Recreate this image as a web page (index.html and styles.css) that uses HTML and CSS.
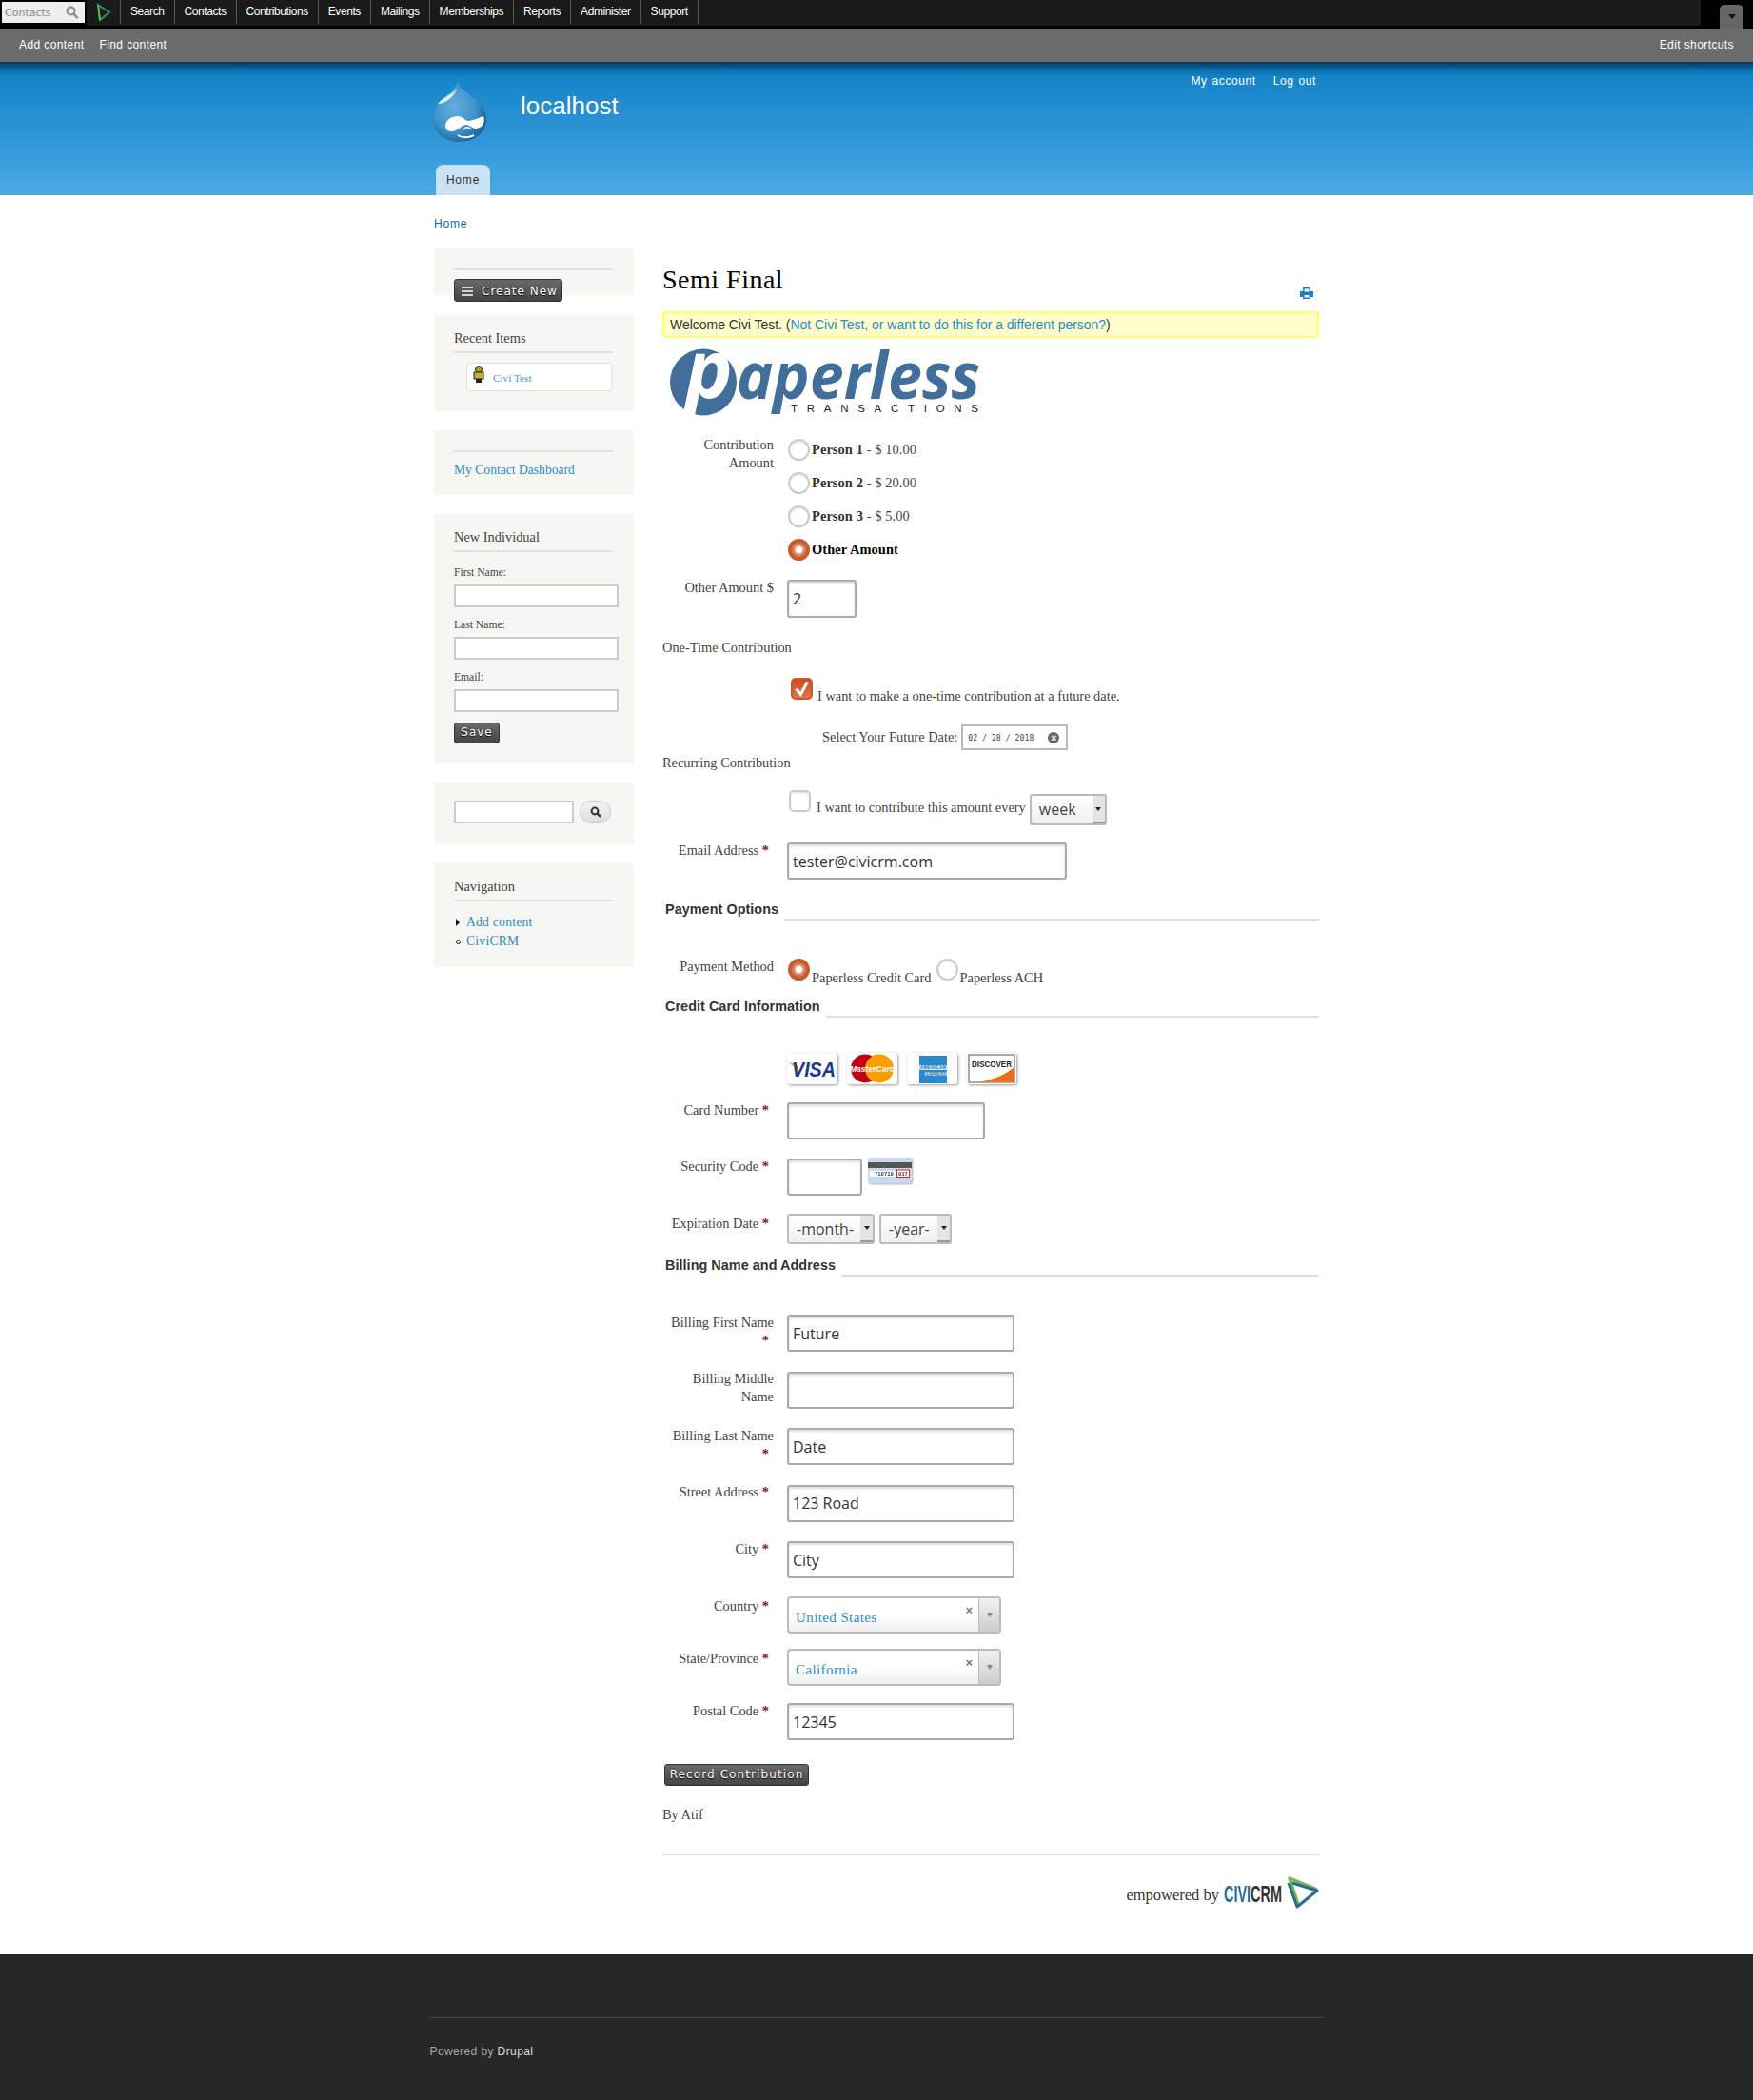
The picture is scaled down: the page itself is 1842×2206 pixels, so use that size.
FILE: index.html
```html
<!DOCTYPE html>
<html lang="en">
<head>
  <meta charset="UTF-8">
  <meta name="viewport" content="width=device-width, initial-scale=1.0">
  <title>Semi Final | localhost</title>
  <link rel="stylesheet" href="styles.css">
</head>
<body>

<div class="civi-bar">
  <div class="civi-quick">
    <div class="quick-box">
      <span>Contacts</span>
      <svg width="14" height="14" viewBox="0 0 14 14"><circle cx="5.5" cy="5.5" r="4" fill="none" stroke="#888" stroke-width="2"/><path d="M8.5 8.5l4 4.5" stroke="#888" stroke-width="2.4"/></svg>
    </div>
  </div>
  <nav class="civi-menu">
    <a class="civi-logo-item"><svg width="16" height="20" viewBox="0 0 16 20"><path d="M2 2l12 8-10 8z" fill="none" stroke="#3b8a6a" stroke-width="2"/><path d="M2 2l2 16" stroke="#5fae4c" stroke-width="2"/></svg></a>
    <a>Search</a>
    <a>Contacts</a>
    <a>Contributions</a>
    <a>Events</a>
    <a>Mailings</a>
    <a>Memberships</a>
    <a>Reports</a>
    <a>Administer</a>
    <a>Support</a>
  </nav>
  <div class="bar-handle"><span></span></div>
</div>

<div class="shortcut-bar">
  <a>Add content</a>
  <a>Find content</a>
  <a class="edit-shortcuts">Edit shortcuts</a>
</div>

<header class="site-header">
  <div class="header-top">
    <svg class="drupal-logo" width="57" height="64" viewBox="0 0 57 64">
      <defs>
        <radialGradient id="dropFill" cx="40%" cy="42%" r="62%">
          <stop offset="0" stop-color="#63afdf"/>
          <stop offset="0.65" stop-color="#3f93cb"/>
          <stop offset="1" stop-color="#1a689f"/>
        </radialGradient>
      </defs>
      <path d="M26 0C27 6 32 10 38 14 48 21 56 30 56 41 56 54 44 64 28 64 12 64 0 54 0 41 0 28 8 21 16 14 20 11 25 6 26 0Z" fill="url(#dropFill)"/>
      <path d="M25 8C22 13 10 17 5 24 12 24 22 18 25 8Z" fill="#d8ecf7"/>
      <path d="M13 47C13 41 20 37 26 37 31 37 34 42 37 42 41 42 47 39 53 37 56 44 50 51 44 50 40 49 38 46 35 46 30 46 26 53 19 53 15 53 13 50 13 47Z" fill="#fff"/>
      <path d="M32 51c2-3 6-3 8 0" fill="none" stroke="#fff" stroke-width="1.5"/>
      <path d="M26 57c5 3 11 3 17 0" fill="none" stroke="#fff" stroke-width="2"/>
    </svg>
    <div class="site-name">localhost</div>
    <div class="user-links"><a>My account</a><a>Log out</a></div>
  </div>
  <div class="tab-home">Home</div>
</header>

<div class="page">
  <div class="breadcrumb"><a>Home</a></div>

  <div class="columns">
    <aside class="sidebar">
      <section class="block block-create">
        <div class="rule"></div>
        <a class="btn btn-create">
          <svg width="13" height="10" viewBox="0 0 13 10"><path d="M0 1h12M0 5h12M0 9h12" stroke="#fff" stroke-width="1.6"/></svg>
          Create New
        </a>
      </section>

      <section class="block block-recent">
        <h2>Recent Items</h2>
        <div class="recent-card">
          <svg width="12" height="18" viewBox="0 0 12 18"><circle cx="6" cy="4" r="3.5" fill="#b39a1c" stroke="#222"/><rect x="1" y="7" width="10" height="7" fill="#c7ad2a" stroke="#222"/><rect x="3" y="14" width="6" height="4" fill="#222"/></svg>
          <a>Civi Test</a>
        </div>
      </section>

      <section class="block block-dash">
        <div class="rule"></div>
        <a class="side-link">My Contact Dashboard</a>
      </section>

      <section class="block block-new">
        <h2>New Individual</h2>
        <div class="side-field"><label>First Name:</label><input type="text"></div>
        <div class="side-field"><label>Last Name:</label><input type="text"></div>
        <div class="side-field"><label>Email:</label><input type="text"></div>
        <a class="btn btn-save">Save</a>
      </section>

      <section class="block block-search">
        <input type="text">
        <a class="search-btn"><svg width="12" height="12" viewBox="0 0 12 12"><circle cx="5" cy="5" r="3.4" fill="none" stroke="#333" stroke-width="2"/><path d="M7.5 7.5l3.5 3.5" stroke="#333" stroke-width="2.4"/></svg></a>
      </section>

      <section class="block block-nav">
        <h2>Navigation</h2>
        <ul>
          <li><span class="mark-tri"></span><a>Add content</a></li>
          <li><span class="mark-dot"></span><a>CiviCRM</a></li>
        </ul>
      </section>
    </aside>

    <main class="content">
      <div class="title-row">
        <h1>Semi Final</h1>
        <svg class="print-icon" width="14" height="12" viewBox="0 0 14 12"><path d="M3 0h8v4h3v6h-3v2H3v-2H0V4h3z" fill="#1a7fc4"/><rect x="4.5" y="1.5" width="5" height="3" fill="#fff"/><rect x="4.5" y="8" width="5" height="2.5" fill="#fff"/></svg>
      </div>

      <div class="welcome">Welcome Civi Test. (<a>Not Civi Test, or want to do this for a different person?</a>)</div>

      <svg class="paperless" width="350" height="85" viewBox="0 0 350 85">
        <circle cx="43" cy="41.500" r="35" fill="#426e9c"/>
        <text class="pl-p" x="24" y="58" font-size="84">p</text>
        <text class="pl-word" x="78" y="59" font-size="68" textLength="256" lengthAdjust="spacingAndGlyphs">aperless</text>
        <text class="pl-sub" x="135" y="73" font-size="11.500" textLength="197">TRANSACTIONS</text>
      </svg>

      <div class="row row-opts">
        <label>Contribution Amount</label>
        <div class="field">
          <div class="opt"><input type="radio" name="amt"><span><b>Person 1</b> - $ 10.00</span></div>
          <div class="opt"><input type="radio" name="amt"><span><b>Person 2</b> - $ 20.00</span></div>
          <div class="opt"><input type="radio" name="amt"><span><b>Person 3</b> - $ 5.00</span></div>
          <div class="opt"><input type="radio" name="amt" checked><span><b class="strong">Other Amount</b></span></div>
        </div>
      </div>

      <div class="row row-other">
        <label>Other Amount $</label>
        <div class="field"><input class="text-in w-other" type="text" value="2"></div>
      </div>

      <div class="sub-title one-time">One-Time Contribution</div>
      <div class="check-row check-future">
        <span class="check on"><svg width="19" height="19" viewBox="0 0 16 16"><path d="M3 8l4 5 6-11" fill="none" stroke="#fff" stroke-width="2.6"/></svg></span>
        <span class="check-text">I want to make a one-time contribution at a future date.</span>
      </div>
      <div class="date-row">
        <span>Select Your Future Date:</span>
        <div class="date-in">
          <span>02 / 28 / 2018</span>
          <i>&times;</i>
        </div>
      </div>

      <div class="sub-title recurring">Recurring Contribution</div>
      <div class="check-row check-recur">
        <span class="check"></span>
        <span class="check-text">I want to contribute this amount every</span>
        <div class="sel sel-week"><span>week</span><i></i></div>
      </div>

      <div class="row row-email">
        <label>Email Address <span class="req">*</span></label>
        <div class="field"><input class="text-in w-email" type="text" value="tester@civicrm.com"></div>
      </div>

      <div class="legend legend-pay"><span>Payment Options</span><i></i></div>

      <div class="row row-method">
        <label>Payment Method</label>
        <div class="field method">
          <input type="radio" name="pm" checked><span>Paperless Credit Card</span>
          <input type="radio" name="pm"><span>Paperless ACH</span>
        </div>
      </div>

      <div class="legend"><span>Credit Card Information</span><i></i></div>

      <div class="cards">
        <div class="card">
          <svg width="53" height="33" viewBox="0 0 53 33"><path d="M2 10l8 2 3 8z" fill="#e9a11f"/><text class="card-visa" x="5" y="25" font-size="22" textLength="46" lengthAdjust="spacingAndGlyphs">VISA</text></svg>
        </div>
        <div class="card">
          <svg width="53" height="33" viewBox="0 0 53 33"><circle cx="19" cy="16.500" r="15" fill="#c4000f"/><circle cx="34" cy="16.500" r="15" fill="#fa9e00"/><text class="card-mc" x="3" y="20" font-size="9" textLength="47" lengthAdjust="spacingAndGlyphs">MasterCard</text></svg>
        </div>
        <div class="card">
          <svg width="53" height="33" viewBox="0 0 53 33"><rect x="13" y="3" width="29" height="29" fill="#2a8ad0"/><rect x="13" y="13" width="29" height="5" fill="#cfe4f5"/><rect x="19" y="20" width="23" height="4" fill="#cfe4f5"/><text class="card-amex" x="14" y="17" font-size="4.500" textLength="27">AMERICAN</text><text class="card-amex" x="20" y="24" font-size="4.500" textLength="21">EXPRESS</text></svg>
        </div>
        <div class="card card-last">
          <svg width="52" height="33" viewBox="0 0 52 33"><rect x="2" y="2" width="48" height="29" fill="#fff" stroke="#555"/><path d="M13 30.500C30 28 42 22 49.500 15v15.500z" fill="#f26b14"/><text class="card-disc" x="5" y="15" font-size="9" textLength="42" lengthAdjust="spacingAndGlyphs">DISCOVER</text></svg>
        </div>
      </div>

      <div class="row row-card">
        <label>Card Number <span class="req">*</span></label>
        <div class="field"><input class="text-in w-card" type="text"></div>
      </div>

      <div class="row row-cvv">
        <label>Security Code <span class="req">*</span></label>
        <div class="field cvv-field">
          <input class="text-in w-cvv" type="text">
          <svg class="cvv-img" width="46" height="27" viewBox="0 0 46 27"><rect width="46" height="27" rx="2" fill="#c9daf0"/><rect y="5" width="46" height="6" fill="#555"/><rect x="2" y="14" width="41" height="6" fill="#fff"/><text class="cvv-num" x="7" y="19" font-size="5.500">710710</text><rect x="30.500" y="13" width="13" height="7.500" fill="#fff" stroke="#d9281c"/><text class="cvv-num" x="32" y="19" font-size="5.500">037</text></svg>
        </div>
      </div>

      <div class="row row-exp">
        <label>Expiration Date <span class="req">*</span></label>
        <div class="field exp-field">
          <div class="sel sel-month"><span>-month-</span><i></i></div>
          <div class="sel sel-year"><span>-year-</span><i></i></div>
        </div>
      </div>

      <div class="legend legend-bill"><span>Billing Name and Address</span><i></i></div>

      <div class="row row-bill-first">
        <label>Billing First Name <span class="req">*</span></label>
        <div class="field"><input class="text-in w-bill" type="text" value="Future"></div>
      </div>
      <div class="row row-bill">
        <label>Billing Middle Name</label>
        <div class="field"><input class="text-in w-bill" type="text"></div>
      </div>
      <div class="row row-bill">
        <label>Billing Last Name <span class="req">*</span></label>
        <div class="field"><input class="text-in w-bill" type="text" value="Date"></div>
      </div>
      <div class="row row-bill">
        <label>Street Address <span class="req">*</span></label>
        <div class="field"><input class="text-in w-bill" type="text" value="123 Road"></div>
      </div>
      <div class="row row-bill">
        <label>City <span class="req">*</span></label>
        <div class="field"><input class="text-in w-bill" type="text" value="City"></div>
      </div>
      <div class="row row-country">
        <label>Country <span class="req">*</span></label>
        <div class="field">
          <div class="chosen"><a>United States</a><b>&times;</b><i><span></span></i></div>
        </div>
      </div>
      <div class="row row-state">
        <label>State/Province <span class="req">*</span></label>
        <div class="field">
          <div class="chosen"><a>California</a><b>&times;</b><i><span></span></i></div>
        </div>
      </div>
      <div class="row row-postal">
        <label>Postal Code <span class="req">*</span></label>
        <div class="field"><input class="text-in w-bill" type="text" value="12345"></div>
      </div>

      <a class="btn btn-record">Record Contribution</a>

      <p class="by-line">By Atif</p>

      <div class="empowered">
        <span>empowered by</span>
        <svg width="101" height="34" viewBox="5 0 101 34">
          <text class="civi-word" x="6" y="27" font-size="23" textLength="61" lengthAdjust="spacingAndGlyphs"><tspan fill="#2b6c96">CIVI</tspan><tspan fill="#333">CRM</tspan></text>
          <path d="M75 2l27 11M75 2l9 28" fill="none" stroke="#76b852" stroke-width="3.500" stroke-linecap="round"/>
          <path d="M74 7l9 25 21-17-26-8" fill="none" stroke="#2b6c96" stroke-width="3" stroke-linejoin="round"/>
        </svg>
      </div>
    </main>
  </div>
</div>

<footer class="site-footer">
  <div class="footer-inner">Powered by <a>Drupal</a></div>
</footer>

</body>
</html>
```

FILE: styles.css
```css
* {
  box-sizing: border-box;
}
html {
  background: #272727;
}
body {
  margin: 0;
  font-family: "Liberation Serif", serif;
  font-size: 14.4px;
  color: #444;
  background: #fff;
}
a {
  color: #2a8ccb;
  text-decoration: none;
}
input {
  margin: 0;
}

/* top civi menu */
.civi-bar {
  display: flex;
  height: 30px;
  background: #000;
}
.civi-quick {
  width: 91px;
  padding: 2px 0 0 2px;
}
.quick-box {
  display: flex;
  align-items: center;
  justify-content: space-between;
  width: 87px;
  height: 22px;
  padding: 0 6px 0 3px;
  background: #eee;
  color: #888;
  font: 11px "DejaVu Sans", sans-serif;
}
.civi-menu {
  display: flex;
  width: 1696px;
  height: 27px;
  background: #1a1a1a;
  font: 12px "Liberation Sans", sans-serif;
  letter-spacing: -0.42px;
}
.civi-menu a {
  height: 25px;
  padding: 0 10px;
  border-right: 1px solid #5a5a5a;
  color: #fff;
  line-height: 25px;
}
.civi-menu .civi-logo-item {
  display: flex;
  align-items: center;
  width: 36px;
  padding: 0 0 0 10px;
}
.bar-handle {
  display: flex;
  align-items: center;
  justify-content: center;
  width: 25px;
  height: 25px;
  margin: 5px 0 0 20px;
  background: #666;
  border-radius: 5px 5px 0 0;
}
.bar-handle span {
  border-top: 5px solid #111;
  border-left: 4px solid transparent;
  border-right: 4px solid transparent;
}

.shortcut-bar {
  display: flex;
  gap: 16px;
  height: 35px;
  padding: 0 20px;
  background: #6b6b6b;
  font: 12px "Liberation Sans", sans-serif;
  letter-spacing: 0.4px;
  line-height: 34px;
}
.shortcut-bar a {
  color: #fff;
}
.shortcut-bar .edit-shortcuts {
  margin-left: auto;
}

/* blue header */
.site-header {
  height: 140px;
  padding: 12px 456px 0;
  background: linear-gradient(#02395c, #0d76b6 10px, #1684c9 12%, #48a9e4);
}
.header-top {
  display: flex;
  height: 96px;
}
.drupal-logo {
  margin: 8px 0 0 -1px;
}
.site-name {
  margin: 8px 0 0 35px;
  color: #fff;
  font: 26px/52px "Liberation Sans", sans-serif;
}
.user-links {
  display: flex;
  gap: 18px;
  margin-left: auto;
  padding-right: 3px;
  font: 12px/16px "Liberation Sans", sans-serif;
  letter-spacing: 0.6px;
  word-spacing: 1px;
}
.user-links a {
  color: #fff;
}
.tab-home {
  width: 57px;
  height: 32px;
  margin-left: 2px;
  background: #c9e2f5;
  border-radius: 8px 8px 0 0;
  color: #333;
  font: 12px/32px "Liberation Sans", sans-serif;
  letter-spacing: 0.8px;
  text-align: center;
}

/* page */
.page {
  width: 930px;
  margin: 0 auto;
  padding-bottom: 48px;
}
.breadcrumb {
  height: 56px;
  padding-top: 22px;
  font: 12px/16px "Liberation Sans", sans-serif;
  letter-spacing: 0.8px;
}
.breadcrumb a {
  color: #0071b3;
}
.columns {
  display: flex;
  gap: 30px;
}

/* sidebar */
.sidebar {
  display: flex;
  flex-direction: column;
  gap: 20px;
  width: 210px;
  flex: none;
}
.block {
  padding: 0 21px;
  background: #f6f6f2;
}
.block h2 {
  margin: 0;
  padding: 14px 0 4px;
  border-bottom: 2px solid #e2e1dc;
  color: #444;
  font-size: 14.4px;
  font-weight: normal;
  line-height: 20px;
  width: 167px;
}
.rule {
  width: 167px;
  border-bottom: 2px solid #e2e1dc;
}
.btn {
  display: block;
  background: linear-gradient(#6a6a6a, #444);
  border: 1px solid #333;
  border-radius: 3px;
  color: #fff;
  font: 12px "DejaVu Sans", sans-serif;
  text-shadow: 0 1px 1px #000;
}
.block-create {
  height: 49px;
  margin-bottom: 1px;
  padding-top: 21px;
}
.btn-create {
  display: flex;
  align-items: center;
  gap: 8px;
  width: 114px;
  height: 24px;
  margin-top: 9px;
  padding: 1px 0 0 7px;
  letter-spacing: 1px;
}
.block-recent {
  height: 101px;
}
.recent-card {
  display: flex;
  gap: 9px;
  width: 153px;
  height: 30px;
  margin: 10px 0 0 13px;
  padding: 2px 0 0 6px;
  background: #fff;
  border: 1px solid #e2e1dc;
  border-radius: 3px;
  font-size: 11px;
}
.recent-card a {
  padding-top: 7px;
  color: #4a90e2;
  letter-spacing: 0.1px;
}
.block-dash {
  height: 68px;
  padding-top: 21px;
}
.side-link {
  display: block;
  margin-top: 11px;
  font-size: 13.6px;
  line-height: 16px;
}
.block-new {
  height: 262px;
}
.block-new h2 {
  margin-bottom: 3px;
}
.side-field {
  padding-top: 11px;
}
.side-field label {
  display: block;
  font-size: 11.6px;
  line-height: 15px;
}
.side-field input {
  display: block;
  width: 173px;
  height: 24px;
  margin-top: 5px;
}
.sidebar input {
  background: #fff;
  border: 2px solid #ccc;
  border-right-width: 2px;
}
.btn-save {
  width: 48px;
  height: 22px;
  margin-top: 11px;
  letter-spacing: 1px;
  line-height: 19px;
  text-align: center;
}
.block-search {
  display: flex;
  gap: 6px;
  height: 64px;
  padding-top: 19px;
}
.block-search input {
  width: 126px;
  height: 24px;
}
.search-btn {
  display: flex;
  align-items: center;
  justify-content: center;
  width: 33px;
  height: 24px;
  background: linear-gradient(#f3f3f3, #dedede);
  border: 1px solid #ccc;
  border-radius: 12px;
}
.block-nav {
  height: 110px;
}
.block-nav h2 {
  padding-top: 15px;
}
.block-nav ul {
  margin: 11px 0 0;
  padding: 1px 0 0;
  list-style: none;
}
.block-nav li {
  display: flex;
  align-items: center;
  height: 20px;
  font-size: 13.6px;
  letter-spacing: 0.25px;
}
.mark-tri {
  width: 13px;
}
.mark-tri::before {
  content: "";
  display: block;
  margin-left: 2px;
  width: 0;
  border-left: 4px solid #111;
  border-top: 4px solid transparent;
  border-bottom: 4px solid transparent;
}
.mark-dot {
  width: 5px;
  height: 5px;
  margin: 0 6px 0 2px;
  border: 1.5px solid #111;
  border-radius: 50%;
}

/* main form */
.content {
  width: 690px;
}
.title-row {
  display: flex;
  align-items: flex-end;
  justify-content: space-between;
  margin-top: 17px;
}
.title-row h1 {
  margin: 0;
  color: #000;
  font-size: 28px;
  font-weight: normal;
  letter-spacing: 0.5px;
  line-height: 32px;
}
.print-icon {
  margin: 0 6px -4px 0;
}
.welcome {
  height: 28px;
  margin-top: 17px;
  padding-left: 6px;
  background: #ffc;
  border: 2px solid #ffff66;
  border-radius: 4px;
  color: #333;
  font: 14px/24px "Liberation Sans", sans-serif;
  letter-spacing: -0.03px;
}
.paperless {
  display: block;
  margin-top: 5px;
}
.pl-p {
  fill: #fff;
  font-family: "Open Sans", sans-serif;
  font-style: italic;
  font-weight: 700;
}
.pl-word {
  fill: #426e9c;
  font-family: "Open Sans", sans-serif;
  font-style: italic;
  font-weight: 700;
}
.pl-sub {
  fill: #222;
  font-family: "Liberation Sans", sans-serif;
}

.row {
  display: grid;
  grid-template-columns: 117px 1fr;
  column-gap: 14px;
}
.row > label {
  margin-top: -1.5px;
  line-height: 19px;
  text-align: right;
}
.req {
  margin-right: 5px;
  color: #8b1a1a;
  font-weight: bold;
}
.text-in {
  display: block;
  height: 39px;
  padding: 0 4px;
  background: #fff;
  border: 2px solid #aaa;
  border-radius: 3px;
  box-shadow: inset 0 2px 3px #ddd;
  color: #333;
  font: 16px "Open Sans", sans-serif;
}
input[type="radio"] {
  appearance: none;
  flex: none;
  width: 23px;
  height: 23px;
  margin: 0 0 0 1px;
  background: #fff;
  border: 2px solid #ccc;
  border-radius: 50%;
  box-shadow: inset 0 1px 2px #ddd;
}
input[type="radio"]:checked {
  background: radial-gradient(circle, #fff 0 22%, #e39a78 34%, #cb5a2e 62%, #c04f25 100%);
  border-color: #c65a30;
  box-shadow: none;
}

.row-opts {
  margin-top: 10px;
}
.row-opts > label {
  margin-top: 3px;
}
.opt {
  display: flex;
  align-items: center;
  gap: 2px;
  height: 35px;
  letter-spacing: 0.1px;
}
.opt b {
  color: #333;
}
.opt .strong {
  color: #000;
}
.row-other {
  margin-top: 14px;
}
.w-other {
  width: 73px;
  height: 40px;
}
.sub-title {
  line-height: 19px;
}
.one-time {
  margin-top: 22px;
}
.check-row {
  display: flex;
  align-items: flex-start;
}
.check {
  display: block;
  flex: none;
  width: 23px;
  height: 23px;
  background: #fff;
  border: 2px solid #ccc;
  border-radius: 5px;
  box-shadow: inset 0 1px 2px #ddd;
}
.check.on {
  background: linear-gradient(#c64f25, #e0764a);
  border-color: #c8582e;
  box-shadow: none;
}
.check.on svg {
  display: block;
}
.check-text {
  margin-top: 9.5px;
  line-height: 19px;
}
.check-future {
  margin-top: 22px;
  padding-left: 135px;
  gap: 5px;
}
.date-row {
  display: flex;
  align-items: center;
  gap: 4px;
  margin-top: 20.5px;
  padding-left: 168px;
  height: 27px;
}
.date-in {
  display: flex;
  align-items: center;
  justify-content: space-between;
  width: 112px;
  height: 27px;
  padding: 0 7px 0 5px;
  background: #fff;
  border: 2px solid #bbb;
  color: #444;
  font: 8.2px "DejaVu Sans Mono", monospace;
}
.date-in i {
  width: 12px;
  height: 12px;
  background: #666;
  border-radius: 50%;
  color: #fff;
  font: bold 11px/12px "Liberation Sans", sans-serif;
  text-align: center;
}
.recurring {
  margin-top: 3.5px;
}
.check-recur {
  margin-top: 19.5px;
  padding-left: 133px;
  gap: 6px;
}
.check-recur .check-text {
  margin-top: 9px;
}
.sel {
  display: flex;
  justify-content: space-between;
  height: 33px;
  background: linear-gradient(#fff, #f0f0f0);
  border: 2px solid #bbb;
  border-radius: 3px;
  color: #444;
  font: 16px/28px "Open Sans", sans-serif;
}
.sel span {
  padding-left: 8px;
}
.sel i {
  display: flex;
  align-items: center;
  justify-content: center;
  width: 13px;
  background: #e4e4e4;
  border-bottom: 2px solid #999;
}
.sel i::before {
  content: "";
  border-top: 4px solid #222;
  border-left: 3px solid transparent;
  border-right: 3px solid transparent;
}
.sel-week {
  width: 81px;
  margin: 4px 0 0 -2px;
}
.row-email {
  margin-top: 18px;
}
.w-email {
  width: 294px;
}
.legend {
  display: flex;
  gap: 6px;
  height: 22px;
  padding-left: 3px;
  color: #333;
  font: bold 14.4px/20px "Liberation Sans", sans-serif;
  letter-spacing: 0.05px;
}
.legend i {
  flex: 1;
  border-bottom: 2px solid #e0e0dc;
}
.legend-pay {
  margin-top: 21px;
}
.row-method {
  height: 40px;
  margin-top: 40px;
}
.method {
  display: flex;
  align-items: flex-start;
}
.method span {
  margin: 10.5px 4px 0 2px;
  line-height: 19px;
}
.cards {
  display: flex;
  gap: 10px;
  margin-top: 37px;
  padding-left: 131px;
}
.card {
  width: 53px;
  height: 33px;
  background: #fff;
  border-radius: 3px;
  box-shadow: 1px 1px 3px #999;
}
.card svg {
  display: block;
}
.card-last {
  width: 52px;
}
.card-visa {
  fill: #1a3a8c;
  font-family: "Liberation Sans", sans-serif;
  font-style: italic;
  font-weight: 700;
}
.card-mc {
  fill: #fff;
  font-family: "Liberation Sans", sans-serif;
  font-style: italic;
  font-weight: 700;
}
.card-amex {
  fill: #2a6fb0;
  font-family: "Liberation Sans", sans-serif;
  font-weight: 700;
}
.card-disc {
  fill: #222;
  font-family: "Liberation Sans", sans-serif;
  font-weight: 700;
}
.cvv-num {
  fill: #444;
  font-family: "DejaVu Sans Mono", monospace;
  font-weight: 700;
}
.row-card {
  margin-top: 19px;
}
.w-card {
  width: 208px;
}
.row-cvv {
  margin-top: 20px;
}
.cvv-field {
  display: flex;
  align-items: flex-start;
  gap: 6px;
}
.w-cvv {
  width: 79px;
  height: 39px;
}
.cvv-img {
  margin-top: -1px;
  filter: drop-shadow(1px 1px 1px #aaa);
}
.row-exp {
  margin-top: 19px;
}
.row-exp > label {
  margin-top: 1px;
}
.exp-field {
  display: flex;
  gap: 5px;
}
.sel-month {
  width: 92px;
  height: 32px;
}
.sel-year {
  width: 76px;
  height: 32px;
}
.legend-bill {
  margin-top: 12px;
}
.w-bill {
  width: 239px;
}
.row-bill-first {
  margin-top: 40px;
}
.row-bill {
  margin-top: 20.5px;
}
.chosen {
  display: flex;
  align-items: center;
  width: 225px;
  height: 39px;
  background: linear-gradient(#fff 50%, #eee);
  border: 2px solid #bbb;
  border-radius: 4px;
}
.chosen a {
  flex: 1;
  padding: 5px 0 0 7px;
  font-size: 15px;
  letter-spacing: 0.4px;
}
.chosen b {
  margin: -10px 6px 0 0;
  color: #777;
  font: bold 13px "Liberation Sans", sans-serif;
}
.chosen i {
  display: flex;
  align-items: center;
  justify-content: center;
  width: 22px;
  height: 100%;
  background: linear-gradient(#f2f2f2, #ccc);
  border-left: 1px solid #bbb;
}
.chosen i span {
  border-top: 5px solid #888;
  border-left: 3px solid transparent;
  border-right: 3px solid transparent;
}
.row-country {
  margin-top: 19px;
}
.row-country > label,
.row-state > label {
  margin-top: 1px;
}
.row-state {
  margin-top: 16px;
}
.row-postal {
  margin-top: 18px;
}
.btn-record {
  width: 152px;
  height: 23px;
  margin: 25px 0 0 2px;
  letter-spacing: 1.1px;
  line-height: 20px;
  text-align: center;
}
.by-line {
  margin: 20.5px 0 0;
  padding-bottom: 32px;
  border-bottom: 1px solid #ddd;
  line-height: 19px;
}
.empowered {
  display: flex;
  align-items: center;
  justify-content: flex-end;
  gap: 4px;
  margin-top: 22px;
}
.empowered span {
  padding-top: 6px;
  color: #333;
  font-size: 16.5px;
}
.civi-word {
  font-family: "Liberation Sans", sans-serif;
  font-weight: 700;
}

/* footer */
.site-footer {
  height: 153px;
  padding-top: 66px;
  background: #272727;
}
.footer-inner {
  width: 939px;
  margin: 0 auto;
  padding-top: 27px;
  border-top: 1px solid #444;
  color: #aaa;
  font: 12px/16px "Liberation Sans", sans-serif;
  letter-spacing: 0.4px;
}
.footer-inner a {
  color: #ddd;
}
```
